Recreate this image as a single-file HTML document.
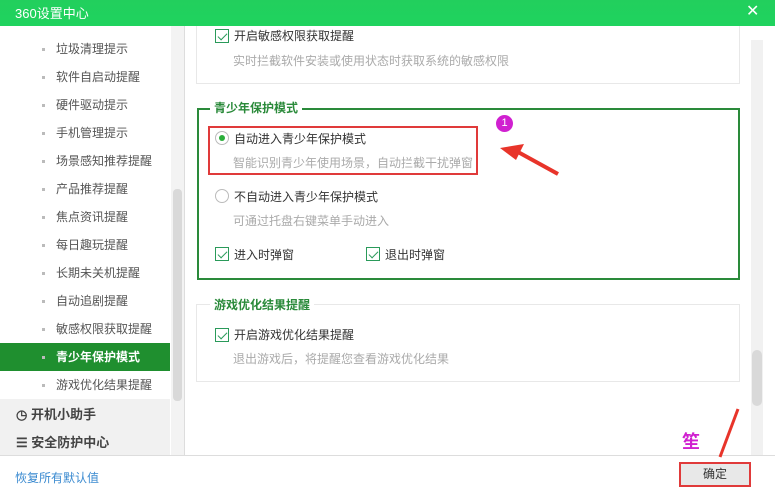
<!DOCTYPE html><html><head><meta charset="utf-8"><style>
*{margin:0;padding:0;box-sizing:border-box}
body{width:775px;height:492px;position:relative;overflow:hidden;background:#fff;font-family:"Liberation Sans","Noto Sans CJK SC",sans-serif;font-size:12px;color:#333}
.a{position:absolute;white-space:nowrap}
.si{position:absolute;left:0;width:170px;height:28px;line-height:28px;padding-left:56px;color:#555}
.si:before{content:"";position:absolute;left:42px;top:13px;width:3px;height:3px;background:#bbb}
.cb{position:absolute;width:14px;height:14px;border:1px solid #2a9a5a;background:#fff}
.cb:after{content:"";position:absolute;left:4px;top:1px;width:4px;height:8px;border:solid #2a9a5a;border-width:0 1px 1px 0;transform:rotate(45deg)}
.g{color:#aaa}
</style></head><body>
<div class="a" style="left:0;top:0;width:775px;height:26px;background:#1ed760;background:linear-gradient(#22cf5d,#1fd35e)"></div>
<div class="a" style="left:15px;top:3px;color:#fff;font-size:13px">360设置中心</div>
<div class="a" style="left:746px;top:1px;color:#fff;font-size:16px">✕</div>
<div class="si" style="top:35px">垃圾清理提示</div>
<div class="si" style="top:63px">软件自启动提醒</div>
<div class="si" style="top:91px">硬件驱动提示</div>
<div class="si" style="top:119px">手机管理提示</div>
<div class="si" style="top:147px">场景感知推荐提醒</div>
<div class="si" style="top:175px">产品推荐提醒</div>
<div class="si" style="top:203px">焦点资讯提醒</div>
<div class="si" style="top:231px">每日趣玩提醒</div>
<div class="si" style="top:259px">长期未关机提醒</div>
<div class="si" style="top:287px">自动追剧提醒</div>
<div class="si" style="top:315px">敏感权限获取提醒</div>
<div class="si" style="top:343px;background:#1f8f2f;color:#fff;font-weight:bold">青少年保护模式</div>
<div class="si" style="top:371px">游戏优化结果提醒</div>
<div class="a" style="left:0;top:399px;width:170px;height:56px;background:#f1f1f1"></div>
<div class="a" style="left:16px;top:404px;font-weight:bold;color:#444;font-size:13px">◷ 开机小助手</div>
<div class="a" style="left:16px;top:432px;font-weight:bold;color:#444;font-size:13px">☰ 安全防护中心</div>
<div class="a" style="left:171px;top:26px;width:13px;height:429px;background:#f3f3f3"></div>
<div class="a" style="left:173px;top:189px;width:9px;height:212px;background:#d9d9d9;border-radius:4px"></div>
<div class="a" style="left:184px;top:26px;width:1px;height:429px;background:#ddd"></div>
<div class="a" style="left:751px;top:40px;width:12px;height:415px;background:#f1f1f1"></div>
<div class="a" style="left:752px;top:350px;width:10px;height:56px;background:#d9d9d9;border-radius:5px"></div>
<div class="a" style="left:196px;top:26px;width:544px;height:58px;border:1px solid #e8e8e8;border-top:none"></div>
<div class="cb" style="left:215px;top:29px"></div>
<div class="a" style="left:234px;top:27px">开启敏感权限获取提醒</div>
<div class="a g" style="left:233px;top:52px">实时拦截软件安装或使用状态时获取系统的敏感权限</div>
<div class="a" style="left:197px;top:108px;width:543px;height:172px;border:2px solid #2a8a3a"></div>
<div class="a" style="left:210px;top:99px;background:#fff;padding:0 4px;color:#2a8a3a;font-weight:bold">青少年保护模式</div>
<div class="a" style="left:208px;top:126px;width:270px;height:49px;border:2px solid #e03a3a"></div>
<div class="a" style="left:215px;top:131px;width:14px;height:14px;border:1px solid #bbb;border-radius:50%;background:#fff"></div>
<div class="a" style="left:219px;top:135px;width:6px;height:6px;border-radius:50%;background:#2aae3a"></div>
<div class="a" style="left:234px;top:130px">自动进入青少年保护模式</div>
<div class="a g" style="left:233px;top:154px">智能识别青少年使用场景，自动拦截干扰弹窗</div>
<div class="a" style="left:215px;top:189px;width:14px;height:14px;border:1px solid #bbb;border-radius:50%"></div>
<div class="a" style="left:234px;top:188px">不自动进入青少年保护模式</div>
<div class="a g" style="left:233px;top:212px">可通过托盘右键菜单手动进入</div>
<div class="cb" style="left:215px;top:247px"></div>
<div class="a" style="left:234px;top:246px">进入时弹窗</div>
<div class="cb" style="left:366px;top:247px"></div>
<div class="a" style="left:385px;top:246px">退出时弹窗</div>
<div class="a" style="left:496px;top:115px;width:17px;height:17px;border-radius:50%;background:#d020d0;color:#fff;font-size:11px;text-align:center;line-height:17px">1</div>
<svg class="a" style="left:490px;top:130px" width="80" height="60"><path d="M68 44 L28 22" stroke="#e8342a" stroke-width="4"/><path d="M10 18 L34 14 L26 30 Z" fill="#e8342a"/></svg>
<div class="a" style="left:196px;top:304px;width:544px;height:78px;border:1px solid #e8e8e8"></div>
<div class="a" style="left:210px;top:296px;background:#fff;padding:0 4px;color:#2a8a3a;font-weight:bold">游戏优化结果提醒</div>
<div class="cb" style="left:215px;top:328px"></div>
<div class="a" style="left:234px;top:326px">开启游戏优化结果提醒</div>
<div class="a g" style="left:233px;top:350px">退出游戏后，将提醒您查看游戏优化结果</div>
<div class="a" style="left:0;top:455px;width:775px;height:1px;background:#ddd"></div>
<div class="a" style="left:15px;top:469px;color:#3a8ad0">恢复所有默认值</div>
<div class="a" style="left:679px;top:462px;width:72px;height:25px;border:2px solid #e03a3a;background:#e8e8e8;text-align:center;line-height:21px">确定</div>
<svg class="a" style="left:712px;top:405px" width="30" height="60"><path d="M26 4 L8 52" stroke="#e8342a" stroke-width="3"/></svg>
<div class="a" style="left:682px;top:428px;color:#d020d0;font-size:18px;font-weight:bold">笙</div>
</body></html>
